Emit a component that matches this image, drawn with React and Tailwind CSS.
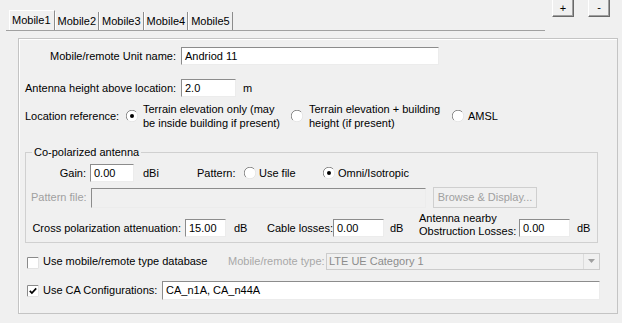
import React from "react";

function Radio({ checked }) {
  return (
    <svg width="12" height="12" viewBox="0 0 12 12" className="shrink-0">
      <circle cx="6" cy="6" r="5.5" fill="#ffffff" />
      <path d="M1.9 10.1 A5.5 5.5 0 0 1 10.1 1.9" fill="none" stroke="#8a8a8a" strokeWidth="1" />
      <path d="M10.1 1.9 A5.5 5.5 0 0 1 1.9 10.1" fill="none" stroke="#e6e6e6" strokeWidth="1" />
      {checked && <circle cx="6" cy="6" r="2" fill="#000000" />}
    </svg>
  );
}

function Check({ checked }) {
  return (
    <svg width="12" height="12" viewBox="0 0 12 12" className="shrink-0">
      <rect x="0" y="0" width="12" height="12" fill="#ffffff" />
      <path d="M0.5 11.5 V0.5 H11.5" fill="none" stroke="#8a8a8a" strokeWidth="1" />
      <path d="M11.5 0.5 V11.5 H0.5" fill="none" stroke="#e3e3e3" strokeWidth="1" />
      {checked && (
        <path d="M2.8 5.8 L4.9 8 L9.2 3.4" fill="none" stroke="#000000" strokeWidth="1.7" />
      )}
    </svg>
  );
}

function Field({ value, className = "", disabled }) {
  return (
    <div
      className={
        "flex items-center shrink-0 box-border border border-t-[#8c8c8c] border-l-[#8c8c8c] border-r-[#ececec] border-b-[#ececec] pl-[3px] leading-[13px] " +
        (disabled ? "bg-[#f0f0f0] " : "bg-white ") +
        className
      }
    >
      {value}
    </div>
  );
}

export default function App() {
  const tabs = ["Mobile1", "Mobile2", "Mobile3", "Mobile4", "Mobile5"];
  return (
    <div className="w-[622px] h-[323px] bg-[#f0f0f0] overflow-hidden whitespace-nowrap text-[11px] text-black font-['Liberation_Sans',Arial,sans-serif]">
      {/* top strip */}
      <div className="flex items-start h-[38px]">
        <div className="ml-[6px] mt-[11px] w-[539px] h-[20px] border-b border-b-[#a0a0a0] flex items-end pl-[3px]">
          {tabs.map((t, i) => (
            <div
              key={t}
              className={
                "flex items-center box-border border-r border-r-[#8c8c8c] border-l border-l-white leading-[13px] " +
                (i === 0 ? "h-[20px] pl-[2px] pr-[3px] border-t border-t-white" : "h-[18px] px-[2px]")
              }
            >
              {t}
            </div>
          ))}
        </div>
        <div className="ml-[7px] -mt-[2px] w-[22px] h-[19px] box-border border border-t-white border-l-white border-r-[#696969] border-b-[#696969] shadow-[inset_-1px_-1px_0_#a0a0a0] flex items-center justify-center leading-[11px] pt-[1px]">
          +
        </div>
        <div className="ml-[14px] -mt-[2px] w-[22px] h-[19px] box-border border border-t-white border-l-white border-r-[#696969] border-b-[#696969] shadow-[inset_-1px_-1px_0_#a0a0a0] flex items-center justify-center leading-[11px]">
          -
        </div>
      </div>

      {/* panel */}
      <div className="ml-[18px] w-[600px] h-[276px] box-border border border-[#c4c4c4] shadow-[inset_1px_1px_0_#ffffff] flex flex-col">
        {/* row 1 */}
        <div className="mt-[8px] h-[18px] flex items-center">
          <div className="w-[157px] text-right leading-[13px]">Mobile/remote Unit name:</div>
          <Field value="Andriod 11" className="ml-[5px] w-[258px] h-[18px]" />
        </div>

        {/* row 2 */}
        <div className="mt-[14px] h-[18px] flex items-center">
          <div className="ml-[6px] w-[156px] leading-[13px]">Antenna height above location:</div>
          <Field value="2.0" className="w-[55px] h-[18px]" />
          <div className="ml-[7px] leading-[13px]">m</div>
        </div>

        {/* row 3 */}
        <div className="mt-[5px] h-[28px] flex items-center">
          <div className="ml-[6px] w-[101px] leading-[13px]">Location reference:</div>
          <Radio checked />
          <div className="ml-[5px] w-[148px] leading-[14px]">
            Terrain elevation only (may
            <br />
            be inside building if present)
          </div>
          <Radio />
          <div className="ml-[6px] w-[143px] leading-[14px]">
            Terrain elevation + building
            <br />
            height (if present)
          </div>
          <Radio />
          <div className="ml-[4px] leading-[13px]">AMSL</div>
        </div>

        {/* group box */}
        <fieldset className="mt-[16px] ml-[6px] w-[573px] h-[97px] box-border border border-[#d0d0d0] flex flex-col">
          <legend className="ml-[6px] px-[2px] leading-[12px]">Co-polarized antenna</legend>

          <div className="mt-[6px] h-[18px] flex items-center">
            <div className="w-[60px] text-right leading-[13px]">Gain:</div>
            <Field value="0.00" className="ml-[4px] w-[44px] h-[18px]" />
            <div className="ml-[9px] w-[54px] leading-[13px]">dBi</div>
            <div className="w-[47px] leading-[13px]">Pattern:</div>
            <Radio />
            <div className="ml-[3px] w-[64px] leading-[13px]">Use file</div>
            <Radio checked />
            <div className="ml-[3px] leading-[13px]">Omni/Isotropic</div>
          </div>

          <div className="mt-[5px] h-[21px] flex items-center">
            <div className="pl-[5px] w-[65px] leading-[13px] text-[#a0a0a0]">Pattern file:</div>
            <Field value="" disabled className="w-[335px] h-[20px]" />
            <div className="ml-[7px] w-[104px] h-[21px] box-border border border-[#cfcfcf] bg-[#f0f0f0] flex items-center justify-center text-[#a0a0a0] leading-[13px]">
              Browse &amp; Display...
            </div>
          </div>

          <div className="mt-[7px] h-[26px] flex items-center">
            <div className="w-[155px] text-right leading-[13px]">Cross polarization attenuation:</div>
            <Field value="15.00" className="ml-[4px] w-[41px] h-[18px]" />
            <div className="ml-[8px] w-[33px] leading-[13px]">dB</div>
            <div className="w-[66px] leading-[13px]">Cable losses:</div>
            <Field value="0.00" className="w-[51px] h-[18px]" />
            <div className="ml-[6px] w-[29px] leading-[13px]">dB</div>
            <div className="w-[100px] leading-[13px] self-start -mt-[3px]">
              Antenna nearby
              <br />
              Obstruction Losses:
            </div>
            <Field value="0.00" className="w-[51px] h-[18px]" />
            <div className="ml-[7px] leading-[13px]">dB</div>
          </div>
        </fieldset>

        {/* checkbox row 1 */}
        <div className="mt-[9px] h-[18px] flex items-center">
          <div className="ml-[8px] mt-[3px]">
            <Check />
          </div>
          <div className="ml-[4px] w-[185px] leading-[13px]">Use mobile/remote type database</div>
          <div className="w-[98px] leading-[13px] text-[#a8a8a8]">Mobile/remote type:</div>
          <div className="w-[274px] h-[17px] box-border border border-[#cccccc] bg-[#f0f0f0] flex items-center">
            <div className="flex-1 pl-[2px] leading-[13px] text-[#8c8c8c]">LTE UE Category 1</div>
            <div className="w-[16px] h-[15px] box-border border-l border-[#dcdcdc] flex items-center justify-center">
              <svg width="7" height="4" viewBox="0 0 7 4">
                <path d="M0 0 H7 L3.5 4 Z" fill="#a0a0a0" />
              </svg>
            </div>
          </div>
        </div>

        {/* checkbox row 2 */}
        <div className="mt-[11px] h-[19px] flex items-center">
          <div className="ml-[8px]">
            <Check checked />
          </div>
          <div className="ml-[4px] w-[119px] leading-[13px]">Use CA Configurations:</div>
          <Field value="CA_n1A, CA_n44A" className="w-[438px] h-[19px]" />
        </div>
      </div>
    </div>
  );
}
